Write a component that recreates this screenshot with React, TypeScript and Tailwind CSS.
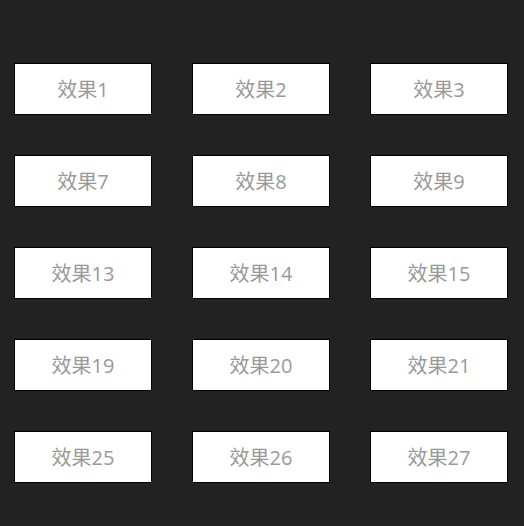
const effects = [1, 2, 3, 7, 8, 9, 13, 14, 15, 19, 20, 21, 25, 26, 27];

export default function App() {
  return (
    <div className="min-h-[526px] w-full bg-[#222222] pl-[14px] pt-[63px]">
      <div className="grid grid-cols-[138px_138px_138px] gap-x-[40px] gap-y-[40px]">
        {effects.map((n) => (
          <div
            key={n}
            className="flex h-[52px] w-[138px] items-center justify-center border border-black bg-white pt-[1px] text-[20px] leading-none text-[#999999] font-['Open_Sans','Noto_Sans_CJK_SC',sans-serif]"
          >
            效果{n}
          </div>
        ))}
      </div>
    </div>
  );
}
